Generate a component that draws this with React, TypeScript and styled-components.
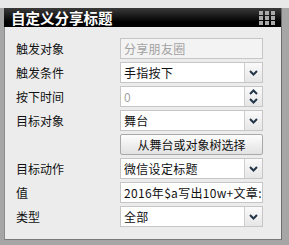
import React from 'react';
import styled, { createGlobalStyle } from 'styled-components';

const GlobalStyle = createGlobalStyle`
  html, body {
    margin: 0;
    padding: 0;
    background: #a6a6a6;
  }
  body {
    font-family: "Noto Sans CJK SC", "Liberation Sans", sans-serif;
  }
`;

interface IRow {
    label: string;
    kind: 'text' | 'select' | 'number' | 'button';
    value: string;
    disabled?: boolean;
}

const rows: IRow[] = [
    { label: '触发对象', kind: 'text', value: '分享朋友圈', disabled: true },
    { label: '触发条件', kind: 'select', value: '手指按下' },
    { label: '按下时间', kind: 'number', value: '0' },
    { label: '目标对象', kind: 'select', value: '舞台' },
    { label: '', kind: 'button', value: '从舞台或对象树选择' },
    { label: '目标动作', kind: 'select', value: '微信设定标题' },
    { label: '值', kind: 'text', value: '2016年$a写出10w+文章:' },
    { label: '类型', kind: 'select', value: '全部' },
];

const Chevron = ({ up }: { up?: boolean }) => (
    <svg width="9" height="6" viewBox="0 0 9 6">
        <polyline
            points={up ? '1,5 4.5,1.5 8,5' : '1,1 4.5,4.5 8,1'}
            fill="none"
            stroke="#23364a"
            strokeWidth="2"
        />
    </svg>
);

const GridIcon = () => (
    <svg width="17" height="14" viewBox="0 0 17 14">
        {[0, 1, 2].map(r =>
            [0, 1, 2].map(c => (
                <rect key={`${r}-${c}`} x={c * 6} y={r * 5} width="4" height="4" fill="#a9a9a9" />
            ))
        )}
    </svg>
);

export default function App() {
    return (
        <React.Fragment>
            <GlobalStyle />
            <Page>
                <TopStrip />
                <Panel>
                    <Header>
                        <Title>自定义分享标题</Title>
                        <GridIcon />
                    </Header>
                    <Body>
                        {rows.map((row, i) => (
                            <React.Fragment key={i}>
                                <Label>{row.label}</Label>
                                {row.kind === 'button' && <Button>{row.value}</Button>}
                                {row.kind === 'text' && (
                                    <Field $disabled={row.disabled}>
                                        <FieldText $muted={row.disabled}>{row.value}</FieldText>
                                    </Field>
                                )}
                                {row.kind === 'select' && (
                                    <Field>
                                        <FieldText>{row.value}</FieldText>
                                        <SideButton>
                                            <Chevron />
                                        </SideButton>
                                    </Field>
                                )}
                                {row.kind === 'number' && (
                                    <Field>
                                        <FieldText $muted>{row.value}</FieldText>
                                        <SideButton $stacked>
                                            <Chevron up />
                                            <Chevron />
                                        </SideButton>
                                    </Field>
                                )}
                            </React.Fragment>
                        ))}
                    </Body>
                </Panel>
            </Page>
        </React.Fragment>
    );
}

const Page = styled.div`
    width: 289px;
    height: 245px;
    background: #a6a6a6;
    overflow: hidden;
`;

const TopStrip = styled.div`
    height: 8px;
    background: #e8e8e8;
`;

const Panel = styled.div`
    margin-left: 4px;
    width: 278px;
    border-right: 1px solid #6e6e6e;
    box-sizing: border-box;
`;

const Header = styled.div`
    height: 19px;
    display: flex;
    align-items: center;
    justify-content: space-between;
    padding: 0 5px 0 7px;
    background: linear-gradient(#3a3a3a, #000 75%);
`;

const Title = styled.div`
    color: #fff;
    font-size: 14.5px;
    font-weight: bold;
    line-height: 19px;
`;

const Body = styled.div`
    height: 213px;
    box-sizing: border-box;
    padding: 11px 0 0 11px;
    background: #ececec;
    border-left: 1px solid #8c8c8c;
    border-bottom: 1px solid #7a7a7a;
    display: grid;
    grid-template-columns: 104px 143px;
    grid-auto-rows: 21px;
    row-gap: 3px;
    align-content: start;
`;

const Label = styled.div`
    font-size: 12px;
    line-height: 21px;
    color: #111;
`;

const Field = styled.div<{ $disabled?: boolean }>`
    display: flex;
    background: ${p => (p.$disabled ? '#f3f3f3' : '#fff')};
    border: 1px solid #c6c6c6;
    box-sizing: border-box;
    overflow: hidden;
`;

const FieldText = styled.div<{ $muted?: boolean }>`
    flex: 1;
    padding-left: 3px;
    font-size: 12px;
    letter-spacing: 0.3px;
    line-height: 19px;
    white-space: nowrap;
    overflow: hidden;
    color: ${p => (p.$muted ? '#a2a2a2' : '#111')};
`;

const SideButton = styled.div<{ $stacked?: boolean }>`
    width: 17px;
    display: flex;
    flex-direction: column;
    align-items: center;
    justify-content: ${p => (p.$stacked ? 'space-around' : 'center')};
    border-left: 1px solid #cfcfcf;
    background: linear-gradient(#fafafa, #e6e6e6);
`;

const Button = styled.div`
    box-sizing: border-box;
    border: 1px solid #a9a9a9;
    border-radius: 2px;
    background: linear-gradient(#fdfdfd, #e2e2e2);
    font-size: 12px;
    line-height: 19px;
    text-align: center;
    color: #111;
`;
